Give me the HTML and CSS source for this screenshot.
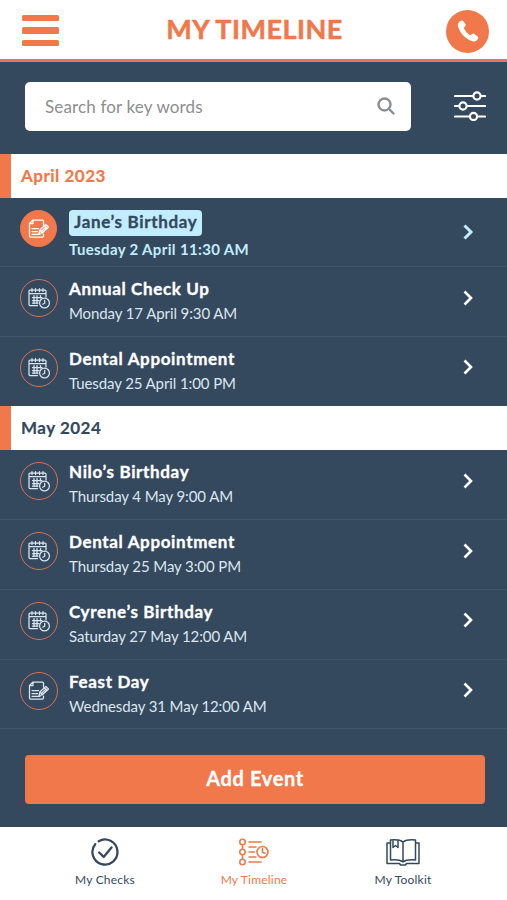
FILE: index.html
```html
<!DOCTYPE html>
<html lang="en">
<head>
<meta charset="utf-8">
<title>My Timeline</title>
<link rel="stylesheet" href="styles.css">
</head>
<body>
<svg class="defs" width="0" height="0" aria-hidden="true">
  <symbol id="calendar" viewBox="0 0 24 24">
    <path d="M10.5 19.5H3Q2 19.5 2 18.5V5Q2 4 3 4H18Q19 4 19 5V11M2 7.5H19M5 2.5V5.5M8.5 2.5V5.5M12.5 2.5V5.5M16 2.5V5.5"/>
    <path d="M5.5 11.5H15M5.5 14.5H12M5.5 17H11M7 9.5V17.5M10 9.5V17.5M13.5 9.5V12"/>
    <circle cx="17.500" cy="17" r="4.900"/><path d="M17.700 14.300V17.200L15.700 18.200"/>
  </symbol>
  <symbol id="note" viewBox="0 0 24 24">
    <path d="M16.500 8V4Q16.500 3 15.500 3H6L2.500 6.500V19Q2.500 20 3.500 20H15.500Q16.500 20 16.500 19V17M2.500 6.500H6V3M5 11.500H11.500M5 14.500H10.500M5 17.300H13"/>
    <path d="M12 16.500L12.800 13L18.800 7.500L21.500 10L15.500 15.800ZM17.300 9L20 11.500M12.800 13L15.500 15.800M14.500 14.200L19.300 10.100"/>
  </symbol>
  <symbol id="chevron" viewBox="0 0 12 18"><path d="M2.500 2.500L9 9L2.500 15.500"/></symbol>
</svg>
<header class="topbar">
  <div class="menu"><i></i><i></i><i></i></div>
  <h1>MY TIMELINE</h1>
  <div class="call"><svg viewBox="0 0 24 24" width="24" height="24"><path d="M4.500 2Q6 0.800 7.400 2.200L9.500 5Q10.300 6.500 9 7.500L7.700 8.900Q9.500 13.300 14.200 16.200L16.300 14.900Q17.500 14.200 18.700 15.200L21.700 17.600Q23 19 21.600 20.500Q19.600 23 16.600 22.200C9 20 3.400 13.300 1.900 7Q1.300 3.900 4.500 2Z"/></svg></div>
</header>
<main>
  <div class="search-row">
    <div class="search"><span>Search for key words</span>
      <svg viewBox="0 0 18 18" width="18" height="18"><circle cx="7.500" cy="7.500" r="6"/><path d="M12 12L16.500 16.500"/></svg>
    </div>
    <svg class="filter" viewBox="0 0 32 30" width="32" height="30"><path d="M1 5H19M27 5H31M1 15H5M13 15H31M1 25.500H15.500M23.500 25.500H31"/><circle cx="23" cy="5" r="3.600"/><circle cx="9" cy="15" r="3.600"/><circle cx="19.500" cy="25.500" r="3.600"/></svg>
  </div>
  <h2 class="month current">April 2023</h2>
  <ul>
    <li class="event active"><div class="badge"><svg><use href="#note"/></svg></div><div class="info"><h3>Jane’s Birthday</h3><p>Tuesday 2 April 11:30 AM</p></div><svg class="chevron"><use href="#chevron"/></svg></li>
    <li class="event"><div class="badge"><svg><use href="#calendar"/></svg></div><div class="info"><h3>Annual Check Up</h3><p>Monday 17 April 9:30 AM</p></div><svg class="chevron"><use href="#chevron"/></svg></li>
    <li class="event last"><div class="badge"><svg><use href="#calendar"/></svg></div><div class="info"><h3>Dental Appointment</h3><p>Tuesday 25 April 1:00 PM</p></div><svg class="chevron"><use href="#chevron"/></svg></li>
  </ul>
  <h2 class="month">May 2024</h2>
  <ul>
    <li class="event"><div class="badge"><svg><use href="#calendar"/></svg></div><div class="info"><h3>Nilo’s Birthday</h3><p>Thursday 4 May 9:00 AM</p></div><svg class="chevron"><use href="#chevron"/></svg></li>
    <li class="event"><div class="badge"><svg><use href="#calendar"/></svg></div><div class="info"><h3>Dental Appointment</h3><p>Thursday 25 May 3:00 PM</p></div><svg class="chevron"><use href="#chevron"/></svg></li>
    <li class="event"><div class="badge"><svg><use href="#calendar"/></svg></div><div class="info"><h3>Cyrene’s Birthday</h3><p>Saturday 27 May 12:00 AM</p></div><svg class="chevron"><use href="#chevron"/></svg></li>
    <li class="event"><div class="badge"><svg><use href="#note"/></svg></div><div class="info"><h3>Feast Day</h3><p>Wednesday 31 May 12:00 AM</p></div><svg class="chevron"><use href="#chevron"/></svg></li>
  </ul>
  <button class="add">Add Event</button>
</main>
<nav>
  <a><svg viewBox="0 0 28 28" width="28" height="28" stroke-width="2.300"><path d="M4.200 6.200A12.500 12.500 0 1 0 7.700 3.200M8.200 14.500L12.700 19L20.500 9.500"/></svg><span>My Checks</span></a>
  <a class="selected"><svg viewBox="0 0 30 28" width="30" height="28" stroke-width="1.600"><circle cx="3.500" cy="4" r="2.700"/><circle cx="3.500" cy="14" r="2.700"/><circle cx="3.500" cy="24" r="2.700"/><path d="M3.500 6.700V11.300M3.500 16.700V21.300M10 4H22M10 9H17M10 14H15.500M10 19H17M10 24H22M23.500 10.500V14.500L26 15"/><circle cx="23.500" cy="14" r="5.500"/></svg><span>My Timeline</span></a>
  <a><svg viewBox="0 0 34 28" width="34" height="28" stroke-width="1.500"><path d="M17 4Q13 1 4.500 2V22Q13 21 17 24Q21 21 29.500 22V2Q21 1 17 4ZM17 4V24M4.500 5H1V25.500H13.500L14.500 27H19.500L20.500 25.500H33V5H29.500M7 2V9.500L9.500 7.500L12 9.500V2"/></svg><span>My Toolkit</span></a>
</nav>
</body>
</html>
```
FILE: styles.css
```css
* { box-sizing: border-box; margin: 0; padding: 0; }
body { width: 507px; height: 900px; overflow: hidden; background: #fff; font-family: Lato, "Open Sans", sans-serif; color: #fff; }
svg { display: block; fill: none; stroke: currentColor; stroke-linecap: round; stroke-linejoin: round; }
.defs { position: absolute; }
ul { list-style: none; }
.topbar { height: 62px; padding: 0 18px 0 22px; border-bottom: 3px solid #e9774f; display: flex; justify-content: space-between; align-items: center; color: #f0784a; }
.menu { width: 37px; display: flex; flex-direction: column; gap: 6px; margin-top: 2px; }
.menu i { height: 6.300px; border-radius: 1.500px; background: currentColor; }
h1 { font-size: 27px; line-height: 32px; font-weight: 700; letter-spacing: .5px; margin: -2px 0 0 4px; -webkit-text-stroke: .5px currentColor; }
.call { width: 43px; height: 43px; border-radius: 50%; background: #f0784a; display: grid; place-items: center; margin-top: 3px; }
.call svg { fill: #fff; stroke: none; }
main { height: 764.500px; background: #34495e; }
.search-row { height: 91.500px; padding: 19.500px 21px 0 25px; display: flex; justify-content: space-between; align-items: flex-start; }
.search { width: 385.500px; height: 49px; border-radius: 5px; background: #fff; color: #8b8e90; padding: 0 16px 0 20px; display: flex; align-items: center; justify-content: space-between; font-size: 17px; }
.search span { letter-spacing: .15px; }
.search svg { stroke-width: 2.400; }
.filter { margin-top: 9px; stroke-width: 2.200; }
.month { height: 44.500px; border-left: 11px solid #f0784a; background: #fff; color: #34495e; padding-left: 10px; font-size: 17px; line-height: 44px; font-weight: 700; letter-spacing: .5px; -webkit-text-stroke: .2px currentColor; }
.current { color: #f0784a; }
.event { height: 69.750px; border-bottom: 1.500px solid #41566b; padding: 12px 33.500px 0 20px; display: flex; align-items: flex-start; }
.active { height: 69px; }
.event.last { height: 69px; border-bottom: 0; }
.badge { width: 38px; height: 38px; border: 1.600px solid #d77256; border-radius: 50%; display: grid; place-items: center; color: #dce6f0; }
.badge svg { width: 24px; height: 24px; stroke-width: 1.250; }
.active .badge { background: #f0784a; border-color: #f0784a; width: 37px; height: 37px; margin-right: 1px; color: #fff; }
.info { flex: 1; margin-left: 11px; }
h3 { font-size: 17px; line-height: 22px; font-weight: 700; letter-spacing: .65px; -webkit-text-stroke: .35px currentColor; }
.event p { font-size: 15px; line-height: 20px; letter-spacing: -.1px; margin-top: 3px; color: #dce5ee; }
.event h3 { margin-top: -1px; }
.event.active h3 { display: block; width: fit-content; margin-top: 0; height: 26px; line-height: 24px; padding: 0 5px; border-radius: 4px; background: #c2edff; color: #34495e; }
.event.active p { margin-top: 3px; font-weight: 700; letter-spacing: .35px; color: #c2edff; }
.chevron { width: 12px; height: 18px; margin-top: 9.500px; stroke-width: 2.600; stroke-linecap: butt; stroke-linejoin: miter; }
.active .chevron { color: #c2edff; margin-top: 12.500px; stroke-width: 3; }
.add { display: block; width: 460px; height: 49px; margin: 25.500px 0 0 25px; padding-bottom: 3px; border: 0; border-radius: 4px; background: #f0784a; color: #fff; font: 700 20px/46px Lato, sans-serif; letter-spacing: .65px; -webkit-text-stroke: .3px currentColor; }
nav { height: 73.500px; padding: 11px 29.500px 0 30.500px; display: grid; grid-template-columns: repeat(3, 1fr); }
nav a { display: flex; flex-direction: column; align-items: center; color: #34495e; font-size: 12px; line-height: 16px; letter-spacing: .2px; }
nav span { margin-top: 6px; }
nav .selected { color: #f0784a; }
```
